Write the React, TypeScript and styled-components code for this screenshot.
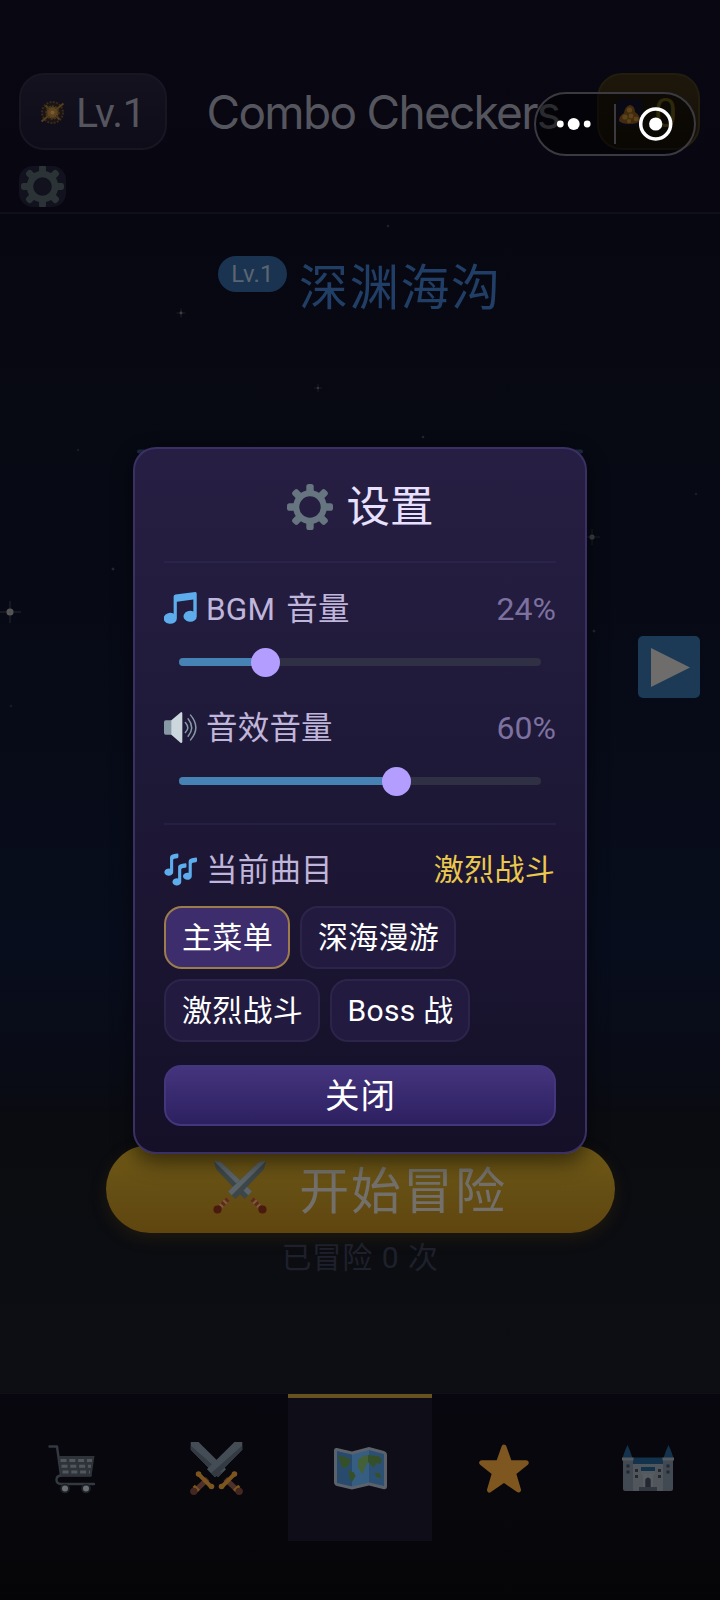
import React, { useState } from 'react';
import styled, { createGlobalStyle } from 'styled-components';

const FONT = `Roboto, "Noto Sans CJK SC", sans-serif`;
const TITLE_FONT = `Inter, "Noto Sans CJK SC", sans-serif`;

const GlobalStyle = createGlobalStyle`
  * { box-sizing: border-box; }
  body { margin: 0; background: #05050b; font-family: ${FONT}; }
  button { font-family: inherit; padding: 0; margin: 0; cursor: pointer; }
  svg { display: block; flex: none; }
`;

const Page = styled.div`
  position: relative;
  display: flex;
  flex-direction: column;
  width: 720px;
  height: 1600px;
  overflow: hidden;
  background: #05050b;
`;

const Header = styled.header`
  display: flex;
  flex-direction: column;
  height: 214px;
  padding: 73px 20px 0 19px;
  background: linear-gradient(#090812, #080611);
  border-bottom: 2px solid #0f1019;
`;

const HeaderRow = styled.div`
  display: flex;
  align-items: center;
  justify-content: space-between;
  height: 77px;
`;

const LevelPill = styled.div`
  display: flex;
  align-items: center;
  gap: 11px;
  width: 148px;
  height: 77px;
  padding: 2px 0 0 19px;
  border: 2px solid #171621;
  border-radius: 25px;
  background: linear-gradient(#14121e, #0e0c19);
  color: #55555e;
  font-size: 41px;
  font-weight: 400;
  letter-spacing: -0.4px;
`;

const AppTitle = styled.h1`
  margin: 0 0 0 2px;
  color: #55555e;
  font-family: ${TITLE_FONT};
  font-size: 46px;
  font-weight: 400;
  line-height: 60px;
  letter-spacing: -1.7px;
  white-space: nowrap;
`;

const CoinPill = styled(LevelPill)`
  width: 103px;
  gap: 12px;
  padding-left: 18px;
  border-color: #231d10;
  background: linear-gradient(#1d170b, #151008);
  color: #5c5317;
`;

const GearButton = styled.button`
  display: flex;
  align-items: center;
  justify-content: center;
  width: 47px;
  height: 41px;
  margin-top: 16px;
  padding-right: 1px;
  overflow: hidden;
  border: 0;
  border-radius: 14px;
  background: #11121d;
`;

const Stage = styled.main`
  position: relative;
  display: flex;
  flex-direction: column;
  height: 898px;
  padding: 42px 20px 0;
  background: linear-gradient(#070711 0%, #070913 25%, #070b17 55%, #080d1d 82%, #090c17 94%, #0a0b12 100%);
`;

const Sky = styled.svg`
  position: absolute;
  left: 0;
  top: 0;
`;

const PlaceRow = styled.div`
  display: flex;
  align-items: flex-start;
  height: 70px;
  padding-left: 198px;
  gap: 12px;
`;

const PlaceLevel = styled.span`
  width: 69px;
  height: 36px;
  border-radius: 18px;
  background: #1a3350;
  color: #5a6571;
  font-size: 24px;
  font-weight: 400;
  line-height: 37px;
  letter-spacing: 0.2px;
  text-align: center;
`;

const PlaceName = styled.h2`
  margin: 2px 0 0;
  color: #213f66;
  font-size: 49px;
  font-weight: 400;
  line-height: 62px;
  letter-spacing: 1.7px;
`;

const NextButton = styled.button`
  width: 62px;
  height: 62px;
  margin: 310px 0 0 auto;
  border: 0;
  border-radius: 5px;
  background: #1c3a55;
`;

const Launch = styled.section`
  display: flex;
  flex-direction: column;
  align-items: center;
  height: 281px;
  padding-top: 33px;
  background: linear-gradient(#0b0c10, #0c0e13);
`;

const StartButton = styled.button`
  display: flex;
  align-items: center;
  justify-content: center;
  gap: 32px;
  width: 509px;
  height: 88px;
  padding: 0 0 4px 0;
  border: 0;
  border-radius: 44px;
  background: linear-gradient(#6e5816, #644d13 60%, #60450f);
  box-shadow: 0 5px 16px rgba(90, 62, 12, 0.26);
  color: #73706b;
  font-size: 50px;
  letter-spacing: 1.9px;
`;

const RunCount = styled.p`
  margin: 7px 0 0;
  color: #1e202c;
  font-size: 30px;
  line-height: 36px;
  letter-spacing: 0.5px;
  word-spacing: 1px;
`;

const NavBar = styled.nav`
  display: flex;
  height: 207px;
  background: linear-gradient(#08070f, #07070b 70%, #050508);
  border-top: 1px solid #101017;
`;

const NavItem = styled.button<{ $active?: boolean }>`
  display: flex;
  align-items: center;
  justify-content: center;
  width: 144px;
  height: 147px;
  padding-bottom: 2px;
  border: 0;
  border-top: 4px solid ${(p) => (p.$active ? '#66531f' : 'transparent')};
  background: ${(p) => (p.$active ? '#0f0d18' : 'transparent')};
`;

const Capsule = styled.div`
  position: absolute;
  left: 534px;
  top: 92px;
  z-index: 5;
  display: flex;
  align-items: center;
  width: 162px;
  height: 64px;
  border: 2px solid #3a3a40;
  border-radius: 32px;
  background: rgba(0, 0, 0, 0.5);
`;

const Overlay = styled.div`
  position: absolute;
  inset: 0;
  z-index: 2;
  display: flex;
  align-items: center;
  justify-content: center;
`;

const Dialog = styled.section`
  display: flex;
  flex-direction: column;
  width: 454px;
  height: 707px;
  padding: 25px 29px 0;
  border: 2px solid #3a3064;
  border-radius: 23px;
  background: linear-gradient(#261f43, #1e1837 50%, #151028);
  box-shadow: 0 8px 20px rgba(0, 0, 0, 0.5);
`;

const DialogTitle = styled.h2`
  display: flex;
  align-items: center;
  justify-content: center;
  gap: 14px;
  height: 89px;
  margin: 0;
  padding-bottom: 20px;
  border-bottom: 2px solid #2a244b;
  color: #e8e0ff;
  font-size: 43.5px;
  font-weight: 400;
`;

/* CJK glyphs sit low in their line box; the bottom padding centres them on the icon. */
const Caption = styled.span<{ $lift: number }>`
  padding-bottom: ${(p) => p.$lift}px;
`;

const SettingRow = styled.div<{ $top: number }>`
  display: flex;
  align-items: center;
  justify-content: space-between;
  height: 40px;
  margin-top: ${(p) => p.$top}px;
`;

const SettingLabel = styled.span`
  display: flex;
  align-items: center;
  gap: 9px;
  color: #c0b5db;
  font-size: 31.5px;
  letter-spacing: 0.2px;
  word-spacing: 3px;
  white-space: pre;
`;

const Percent = styled.span`
  color: #7d71a0;
  font-size: 32px;
  font-weight: 400;
`;

const TrackName = styled.span`
  padding: 0 1px 5px 0;
  color: #eac94c;
  font-size: 30px;
  letter-spacing: 0.3px;
`;

const Slider = styled.div`
  display: flex;
  align-items: center;
  height: 29px;
  margin: 19px 15px 0;
`;

const SliderTrack = styled.div`
  display: flex;
  align-items: center;
  width: 362px;
  height: 8px;
  border-radius: 4px;
  background: #2f3043;
`;

const SliderFill = styled.div`
  height: 8px;
  border-radius: 4px 0 0 4px;
  background: #4682b4;
`;

const SliderThumb = styled.div`
  flex: none;
  width: 29px;
  height: 29px;
  margin-left: -14.5px;
  border-radius: 50%;
  background: #b39dff;
`;

const Divider = styled.hr`
  width: 100%;
  height: 2px;
  margin: 27px 0 0;
  border: 0;
  background: #261f42;
`;

const TrackList = styled.div`
  display: flex;
  flex-wrap: wrap;
  gap: 10px;
  margin-top: 16px;
`;

const TrackChip = styled.button<{ $active: boolean; $width: number }>`
  width: ${(p) => p.$width}px;
  height: 63px;
  padding: 0 0 4px 1px;
  border: 2px solid ${(p) => (p.$active ? '#9c7b4c' : '#2c2549')};
  border-radius: 18px;
  background: ${(p) => (p.$active ? '#3d2d6d' : '#221b3f')};
  color: #fff;
  font-size: 30px;
  letter-spacing: 0.3px;
  white-space: nowrap;
`;

const CloseButton = styled.button`
  height: 61px;
  margin-top: 23px;
  padding: 0 0 5px 1px;
  border: 2px solid #43367a;
  border-radius: 17px;
  background: linear-gradient(#44347e, #2d2060);
  color: #fff;
  font-size: 34.5px;
  letter-spacing: 1px;
`;

const Gear = ({ size, color, hole }: { size: number; color: string; hole: number }) => (
  <svg width={size} height={size} viewBox="-18 -18 36 36">
    <defs>
      <clipPath id="teeth">
        <path clipRule="evenodd" d="M-20-20H20V20H-20ZM-10 0A10 10 0 1 0 10 0A10 10 0 1 0-10 0Z" />
      </clipPath>
    </defs>
    <g fill={color}>
      {[0, 45, 90, 135].map((a) => (
        <rect key={a} x={-2.9} y={-18} width={5.8} height={36} rx={2} transform={`rotate(${a})`}
          clipPath="url(#teeth)" />
      ))}
    </g>
    <circle r={(13.2 + hole) / 2} fill="none" stroke={color} strokeWidth={13.2 - hole} />
  </svg>
);

const Note = () => (
  <svg width="33" height="33" viewBox="0 0 36 36">
    <path fill="#5dadec" d="M34.2.1 12.5 2.6Q10.5 2.9 10.5 5V23.6A7.2 6 0 1 0 14 28.5V10.6L32 8.2V21.3A7.2 6 0 1 0 35.7 26V2Q35.7 0 34.2.1Z" />
  </svg>
);

const QUAVER = 'M14.8.5Q6.6 1.2 6.6 4.5V17.2A4.8 3.9 0 1 0 10 21V7.5Q10 6 14.5 5.6Q15.7 5.4 15.7 4V1.8Q15.7.4 14.8.5Z';

const Notes = () => (
  <svg width="33" height="33" viewBox="0 0 36 36">
    <g fill="#5dadec">
      <path d={QUAVER} />
      <path transform="translate(8.8 10.6)" d={QUAVER} />
      <path transform="translate(20.3 4.4)" d={QUAVER} />
    </g>
  </svg>
);

const Speaker = () => (
  <svg width="33" height="33" viewBox="0 0 36 36">
    <path fill="#8899a6" d="M2 10H9V26H2Q0 26 0 24V12Q0 10 2 10Z" />
    <path fill="#ccd6dd" d="M8 10 18 1.5Q20 .5 20 3V33Q20 35.5 18 34.5L8 26Z" />
    <g fill="none" stroke="#8899a6" strokeWidth="1.6" strokeLinecap="round">
      <path d="M23.3 12.5Q28.5 18 23.3 23.5" />
      <path d="M26.3 8.4Q34 18 26.3 27.6" />
      <path d="M29 4.5Q40.5 18 29 31.5" />
    </g>
  </svg>
);

const NavSwords = () => (
  <svg width="53" height="53" viewBox="0 0 36 36" opacity={0.47}>
    {[undefined, 'translate(36 0) scale(-1 1)'].map((t, i) => (
      <g key={i} transform={t}>
        <path fill="#8899a6" d="M.5 0H5.8L24.5 18.5 19 24 .5 5.2Z" />
        <path fill="#66757f" d="M.5 2.4 21.8 21.3 19 24 .5 5.2Z" />
        <path stroke="#a0604a" strokeWidth="3.6" d="M24 25 33 33.6" />
        <path stroke="#ffac33" strokeWidth="2.8" d="M21.8 30.2 30 22" />
        <path stroke="#ffac33" strokeWidth="2.2" d="M30 33.2 33.5 29.8" />
        <circle cx="21.4" cy="30.2" r="1.9" fill="#ffac33" />
        <circle cx="30.2" cy="21.8" r="1.9" fill="#ffac33" />
        <circle cx="33.4" cy="33.5" r="2.5" fill="#8a4b38" />
      </g>
    ))}
  </svg>
);

const BattleSwords = () => (
  <svg width="54" height="54" viewBox="0 0 36 36">
    {[undefined, 'translate(36 0) scale(-1 1)'].map((t, i) => (
      <g key={i} transform={t}>
        <path fill="#3d4648" d="M.5.5 5.4 1.4 26 21 21 26 2 6Z" />
        <path fill="#5a6367" d="M.5.5 5.4 1.4 26 21 23.5 23.5Z" />
        <path stroke="#7a5a3c" strokeWidth="3.2" d="M26 26 32.5 32.5" />
        <path stroke="#5f2a18" strokeWidth="3.2" strokeDasharray="2 1.5" d="M26 26 32.5 32.5" />
        <circle cx="33" cy="33" r="2.7" fill="#4a1a0e" />
      </g>
    ))}
  </svg>
);

const Cart = () => (
  <svg width="48" height="50" viewBox="0 0 48 50" opacity={0.46}>
    <g fill="none" stroke="#66757f" strokeWidth="2.4" strokeLinecap="round" strokeLinejoin="round">
      <path d="M1.5 2.5H9L13 31.5H42.5" />
      <path d="M13 31.5Q8.5 32 8.5 35.5 8.5 40 13 40H46" />
    </g>
    <path fill="#5c6870" d="M10.5 12H46.5L43.5 32H13Z" />
    <g stroke="#a9b4bb" strokeWidth="3" strokeDasharray="6 2.8">
      <path d="M12.5 16.5H44" />
      <path d="M13.5 22.3H43" />
      <path d="M14.5 28H42" />
    </g>
    <circle cx="17" cy="44.5" r="4.8" fill="#3a444b" />
    <circle cx="38" cy="44.5" r="4.8" fill="#3a444b" />
    <circle cx="17" cy="44.5" r="3" fill="#e1e8ed" />
    <circle cx="38" cy="44.5" r="3" fill="#e1e8ed" />
  </svg>
);

const WorldMap = () => (
  <svg width="53" height="43" viewBox="0 0 53 43" opacity={0.5}>
    <path fill="#a9b6bf" d="M3 1 18 4.5 35 0 50 4Q53 5 53 8V40Q52.5 43 49 42L35 38.5 18 42.5 3 39Q0 38 0 35V3Q.5.5 3 1Z" />
    <path fill="#4289c1" d="M3 4 18 7.5V39.5L3 36Z" />
    <path fill="#5dadec" d="M18 7.5 35 3V35.5L18 39.5Z" />
    <path fill="#4a93cf" d="M35 3 50 7V39L35 35.5Z" />
    <path fill="#5c913b" d="M4 9 10 9.5 17 13 14.5 18 10.5 22 7.5 18.5Z" />
    <path fill="#5c913b" d="M14 23 20 25.5 21.5 29 18 35 15.5 31Z" />
    <path fill="#77b255" d="M24 13 29 9 34 8V15L31 20 29 27 26 24 24 19Z" />
    <path fill="#5c913b" d="M34 8 44 9 48 12 46.5 17 42 16 40 21 34 15Z" />
    <path fill="#5c913b" d="M41 26 46 26 47 31 42 30Z" />
  </svg>
);

const Star = () => (
  <svg width="50" height="49" viewBox="0 0 50 49" opacity={0.48}>
    <path fill="#ffac33" stroke="#ffac33" strokeWidth="5" strokeLinejoin="round"
      d="M25 3 30.5 18.5 47.3 18.7 34.5 29 39.5 46 25 36 10.5 46 15.5 29 2.7 18.7 19.5 18.5Z" />
  </svg>
);

const Castle = () => (
  <svg width="54" height="47" viewBox="0 0 54 47" opacity={0.45}>
    <path fill="#226699" d="M6.5 0Q9.5 6 11.5 13H1.5Q3.5 6 6.5 0ZM47.5 0Q50.5 6 52.5 13H42.5Q44.5 6 47.5 0ZM11 12.5H43V21H11Z" />
    <path fill="#aab6be" d="M12 19H42V46H12Z" />
    <path fill="#8899a6" d="M2 15H12V46H4Q2 46 2 44ZM42 15H52V44Q52 46 50 46H42Z" />
    <path fill="#b4c0c8" d="M1 12.5H12.5V15.5H1ZM41.5 12.5H53V15.5H41.5ZM20 26H34V30H20Z" />
    <path fill="#226699" d="M20 22H34V26H20Z" />
    <path fill="#b9c4cb" d="M22 29H32V42H22Z" />
    <path fill="#44515b" d="M24.3 42V34.5Q27 30.5 29.7 34.5V42ZM5.5 19.5H8.5V22.5H5.5ZM5.5 25.5H8.5V28.5H5.5ZM45.5 19.5H48.5V22.5H45.5ZM45.5 25.5H48.5V28.5H45.5ZM14 24H17V27H14ZM14 30H17V33H14ZM37 24H40V27H37ZM37 30H40V33H37Z" />
    <path fill="#66757f" d="M18 42H36V46H18Z" />
  </svg>
);

const Compass = () => (
  <svg width="25" height="25" viewBox="-12.5 -12.5 25 25">
    <circle r="10.5" fill="#1a1516" stroke="#392a18" strokeWidth="2" strokeDasharray="2 1.3" />
    <path stroke="#553e1e" strokeWidth="2" d="M-11 9 11-9M-7-7 7 7" />
    <circle r="6" fill="#5e4420" stroke="#46331a" strokeWidth="2.4" strokeDasharray="2 1" />
    <circle r="2" fill="#7a5c2e" />
  </svg>
);

const CoinPile = () => (
  <svg width="25" height="27" viewBox="0 0 25 27">
    <rect width="25" height="27" rx="3" fill="#12122a" />
    <path fill="#8a561c" d="M2 22Q2 17 7 14 8 7 13 6 18 7 18 13 23 16 23 22 20 25 12.5 25 5 25 2 22Z" />
    <g fill="#b58834">
      <circle cx="12.5" cy="11" r="2.6" />
      <circle cx="8" cy="18" r="2.6" />
      <circle cx="14" cy="17" r="2.4" />
      <circle cx="19" cy="20" r="2.3" />
      <circle cx="12" cy="22" r="2" />
    </g>
  </svg>
);

const stars: [number, number, number, number][] = [
  [181, 99, 4.5, 0.34], [318, 174, 4, 0.28], [423, 223, 1.5, 0.22], [388, 12, 1.5, 0.18],
  [592, 323, 8, 0.32], [10, 398, 11, 0.46], [113, 355, 2, 0.22], [594, 417, 2, 0.2],
  [78, 236, 1.5, 0.12], [696, 280, 1.5, 0.14], [11, 492, 1.5, 0.12],
];

const StarField = () => (
  <Sky width="720" height="898" viewBox="0 0 720 898">
    {stars.map(([x, y, r, o]) => (
      <g key={`${x}-${y}`} opacity={o} transform={`translate(${x} ${y})`}>
        <circle r={Math.max(1.1, r * 0.32)} fill="#b7b3a6" />
        <path stroke="#8f8d84" strokeWidth="1" opacity={0.5} d={`M${-r} 0H${r}M0 ${-r}V${r}`} />
      </g>
    ))}
    <path stroke="#1b2a3c" strokeWidth="4" strokeLinecap="round" d="M139 237.5H581" />
  </Sky>
);

const tracks = [
  { name: '主菜单', width: 126 },
  { name: '深海漫游', width: 156 },
  { name: '激烈战斗', width: 156 },
  { name: 'Boss 战', width: 140 },
];

const VolumeSlider = ({ value }: { value: number }) => (
  <Slider>
    <SliderTrack>
      <SliderFill style={{ width: `${value}%` }} />
      <SliderThumb />
    </SliderTrack>
  </Slider>
);

export default function App() {
  const [selected, setSelected] = useState('主菜单');

  return (
    <>
      <GlobalStyle />
      <Page>
        <Header>
          <HeaderRow>
            <LevelPill><Compass />Lv.1</LevelPill>
            <AppTitle>Combo Checkers</AppTitle>
            <CoinPill><CoinPile />0</CoinPill>
          </HeaderRow>
          <GearButton aria-label="设置"><Gear size={43} color="#2b3337" hole={7.8} /></GearButton>
        </Header>

        <Stage>
          <StarField />
          <PlaceRow>
            <PlaceLevel>Lv.1</PlaceLevel>
            <PlaceName>深渊海沟</PlaceName>
          </PlaceRow>
          <NextButton aria-label="下一个">
            <svg width="62" height="62" viewBox="0 0 62 62">
              <path fill="#6e6d6c" d="M13 12V51L52 31.5Z" />
            </svg>
          </NextButton>
        </Stage>

        <Launch>
          <StartButton><BattleSwords />开始冒险</StartButton>
          <RunCount>已冒险 0 次</RunCount>
        </Launch>

        <NavBar>
          <NavItem aria-label="商店"><Cart /></NavItem>
          <NavItem aria-label="装备"><NavSwords /></NavItem>
          <NavItem aria-label="地图" $active><WorldMap /></NavItem>
          <NavItem aria-label="收藏"><Star /></NavItem>
          <NavItem aria-label="城堡"><Castle /></NavItem>
        </NavBar>

        <Overlay>
          <Dialog>
            <DialogTitle>
              <Gear size={46} color="#66757f" hole={8.4} />
              <Caption $lift={7}>设置</Caption>
            </DialogTitle>
            <SettingRow $top={26}>
              <SettingLabel><Note /><Caption $lift={5}>BGM 音量</Caption></SettingLabel>
              <Percent>24%</Percent>
            </SettingRow>
            <VolumeSlider value={24} />
            <SettingRow $top={31}>
              <SettingLabel><Speaker /><Caption $lift={5}>音效音量</Caption></SettingLabel>
              <Percent>60%</Percent>
            </SettingRow>
            <VolumeSlider value={60} />
            <Divider />
            <SettingRow $top={25}>
              <SettingLabel><Notes /><Caption $lift={5}>当前曲目</Caption></SettingLabel>
              <TrackName>激烈战斗</TrackName>
            </SettingRow>
            <TrackList>
              {tracks.map((t) => (
                <TrackChip key={t.name} $width={t.width} $active={t.name === selected}
                  onClick={() => setSelected(t.name)}>
                  {t.name}
                </TrackChip>
              ))}
            </TrackList>
            <CloseButton>关闭</CloseButton>
          </Dialog>
        </Overlay>

        <Capsule>
          <svg width="158" height="60" viewBox="536 94 158 60">
            <g fill="#fff">
              <circle cx="560.3" cy="124" r="3.4" />
              <circle cx="573.7" cy="124" r="6" />
              <circle cx="587.2" cy="124" r="3.4" />
              <circle cx="655.7" cy="124" r="6.6" />
            </g>
            <path stroke="#3a3a40" strokeWidth="2" d="M615 104V144" />
            <circle cx="655.7" cy="124" r="15" fill="none" stroke="#fff" strokeWidth="3.5" />
          </svg>
        </Capsule>
      </Page>
    </>
  );
}
